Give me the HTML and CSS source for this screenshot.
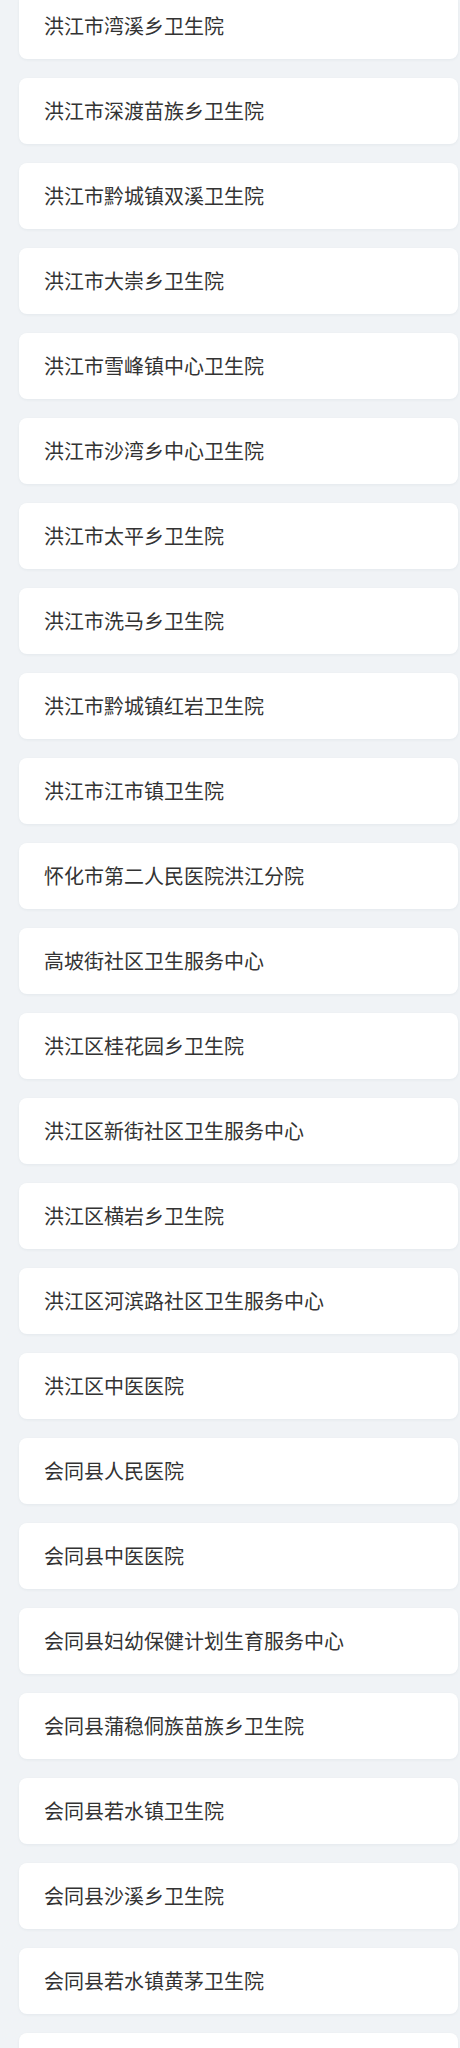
FILE: index.html
```html
<!DOCTYPE html>
<html lang="zh-CN">
<head>
<meta charset="utf-8">
<title>医院列表</title>
<link rel="stylesheet" href="styles.css">
</head>
<body>
<div class="list">
  <div class="card">洪江市湾溪乡卫生院</div>
  <div class="card">洪江市深渡苗族乡卫生院</div>
  <div class="card">洪江市黔城镇双溪卫生院</div>
  <div class="card">洪江市大崇乡卫生院</div>
  <div class="card">洪江市雪峰镇中心卫生院</div>
  <div class="card">洪江市沙湾乡中心卫生院</div>
  <div class="card">洪江市太平乡卫生院</div>
  <div class="card">洪江市洗马乡卫生院</div>
  <div class="card">洪江市黔城镇红岩卫生院</div>
  <div class="card">洪江市江市镇卫生院</div>
  <div class="card">怀化市第二人民医院洪江分院</div>
  <div class="card">高坡街社区卫生服务中心</div>
  <div class="card">洪江区桂花园乡卫生院</div>
  <div class="card">洪江区新街社区卫生服务中心</div>
  <div class="card">洪江区横岩乡卫生院</div>
  <div class="card">洪江区河滨路社区卫生服务中心</div>
  <div class="card">洪江区中医医院</div>
  <div class="card">会同县人民医院</div>
  <div class="card">会同县中医医院</div>
  <div class="card">会同县妇幼保健计划生育服务中心</div>
  <div class="card">会同县蒲稳侗族苗族乡卫生院</div>
  <div class="card">会同县若水镇卫生院</div>
  <div class="card">会同县沙溪乡卫生院</div>
  <div class="card">会同县若水镇黄茅卫生院</div>
  <div class="card"></div>
</div>
</body>
</html>
```
FILE: styles.css
```css
html, body {
  margin: 0;
  padding: 0;
  background: #f0f3f6;
}
body {
  font-family: "Noto Sans CJK SC", "Noto Sans", sans-serif;
  color: #333;
  overflow: hidden;
}
.list {
  display: flex;
  flex-direction: column;
  gap: 19px;
  margin-top: -7px;
  padding: 0 2px 0 19px;
}
.card {
  height: 66px;
  box-sizing: border-box;
  display: flex;
  align-items: center;
  padding-left: 25px;
  background: #fff;
  border-radius: 8px;
  box-shadow: 0 1px 3px rgba(40, 60, 90, 0.06);
  font-size: 20px;
  line-height: 1;
  white-space: nowrap;
}
```
